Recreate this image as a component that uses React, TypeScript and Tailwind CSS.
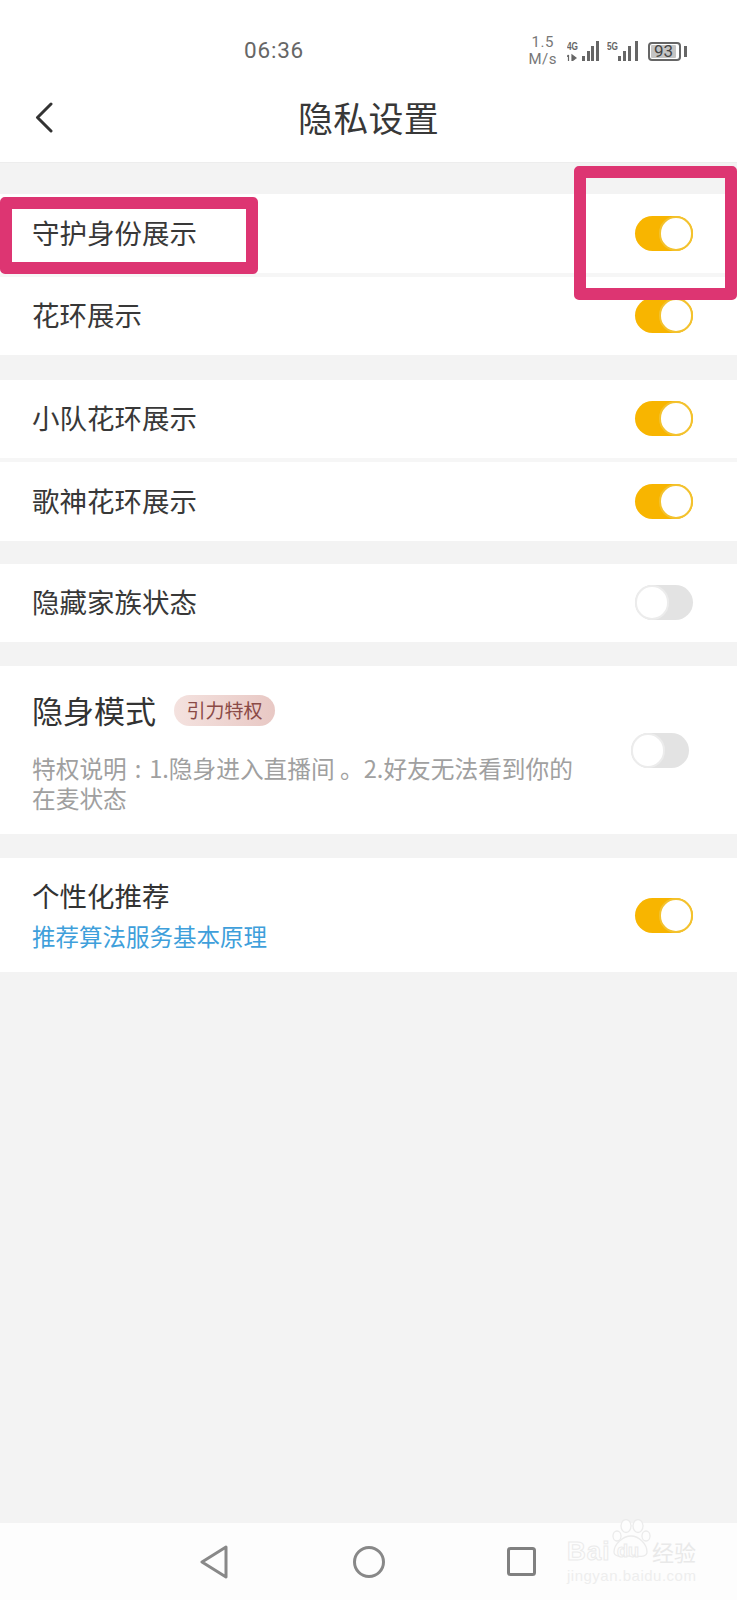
function Toggle({ on }: { on: boolean }) {
  return (
    <div
      className={`flex h-[35px] w-[58px] shrink-0 rounded-full ${on ? 'justify-end bg-[#f8b500]' : 'justify-start bg-[#e3e3e3]'}`}
    >
      <div
        className={`h-[35px] w-[34px] rounded-full border-2 bg-white ${on ? 'border-[#f3c22e]' : 'border-[#ececec]'}`}
      />
    </div>
  );
}

function Row({ label, on }: { label: string; on: boolean }) {
  return (
    <div className="flex h-[78.5px] items-center justify-between bg-white pl-[32px] pr-[44px]">
      <span className="-mt-[2px] text-[27.5px] text-[#383838]">{label}</span>
      <Toggle on={on} />
    </div>
  );
}

function Signal({ label, bars, width, twoLine }: { label: string; bars: number[]; width: number; twoLine?: boolean }) {
  const heights = [5, 10, 15, 20];
  return (
    <svg width={width} height="20" viewBox={`0 0 ${width} 20`} className="shrink-0">
      <text
        x="0"
        y="8.5"
        fontSize="10"
        fontWeight="700"
        fill="#666"
        textLength="11"
        lengthAdjust="spacingAndGlyphs"
        fontFamily="'Liberation Sans', sans-serif"
      >
        {label}
      </text>
      {twoLine && <path d="M1.5 14v6M0 15.5l1.5-1.5M5 14v6l4-3z" stroke="#666" strokeWidth="1.2" fill="#666" />}
      {bars.map((x, i) => (
        <rect key={x} x={x} y={20 - heights[i]} width="3" height={heights[i]} fill="#666" />
      ))}
    </svg>
  );
}

function StatusBar() {
  return (
    <div className="flex h-[80px] items-center pl-[244px] pr-[50px] pt-[22px] text-[#666666] font-['Roboto','Noto_Sans',sans-serif]">
      <span className="text-[22.5px] tracking-[0.8px]">06:36</span>
      <div className="ml-auto flex items-center">
        <div className="mr-[10px] flex flex-col items-center text-[15px] leading-[17px] tracking-[0.5px] text-[#777777]">
          <span>1.5</span>
          <span>M/s</span>
        </div>
        <Signal label="4G" width={32} twoLine bars={[15, 20, 24, 29]} />
        <div className="ml-[8px]">
          <Signal label="5G" width={32} bars={[11, 16, 21, 28]} />
        </div>
        <div className="ml-[9px] flex items-center gap-[3px]">
          <div className="flex h-[19px] w-[33px] items-center rounded-[4px] border-2 border-[#666666] p-[1px]">
            <div className="flex h-full w-[25px] items-center justify-center rounded-[1px] bg-[#c4c4c4] text-[17px] leading-none text-[#444444]">
              93
            </div>
          </div>
          <div className="h-[11px] w-[3px] bg-[#666666]" />
        </div>
      </div>
    </div>
  );
}

function Watermark() {
  return (
    <div className="pointer-events-none absolute left-[567px] top-[1519px] h-[66px] w-[132px] font-['Liberation_Sans',sans-serif]">
      <svg width="44" height="38" viewBox="0 0 44 38" className="absolute left-[44px] top-[0px]" fill="#fdfdfd" stroke="#ebebeb" strokeWidth="1.3">
        <ellipse cx="6" cy="17" rx="4" ry="5" />
        <ellipse cx="15" cy="7" rx="5" ry="6.5" />
        <ellipse cx="27" cy="7" rx="5" ry="6.5" />
        <ellipse cx="35" cy="17" rx="4" ry="5" />
        <path d="M3 33c0-8 9-16 17-16s16 8 16 16c0 6-10 4-16 4s-17 2-17-4z" />
      </svg>
      <span className="absolute left-0 top-[18px] text-[26px] font-bold leading-[28px] tracking-[1px] text-[#fdfdfd] [-webkit-text-stroke:1px_#ebebeb]">
        Bai
      </span>
      <span className="absolute left-[50px] top-[22px] text-[18px] font-bold leading-[20px] text-[#fdfdfd] [-webkit-text-stroke:1px_#ebebeb]">
        du
      </span>
      <span className="absolute left-[85px] top-[18px] text-[22px] leading-[28px] text-[#e9e9e9] font-['Noto_Sans_CJK_SC',sans-serif]">
        经验
      </span>
      <span className="absolute left-0 top-[48px] text-[15px] leading-[18px] tracking-[0.5px] text-[#eeeeee]">
        jingyan.baidu.com
      </span>
    </div>
  );
}

export default function App() {
  return (
    <div className="relative flex h-[1600px] w-[737px] flex-col overflow-hidden bg-[#f3f3f3] font-['Noto_Sans_CJK_SC','Noto_Sans',sans-serif]">
      {/* 顶部 */}
      <div className="h-[163px] shrink-0 border-b border-[#ededed] bg-white">
        <StatusBar />
        <div className="relative flex h-[74px] items-center justify-center">
          <svg width="18" height="31" viewBox="0 0 18 31" fill="none" className="absolute left-[35px] top-[22px]">
            <path d="M16 2 L2.5 15.5 L16 29" stroke="#333" strokeWidth="3" strokeLinecap="round" strokeLinejoin="round" />
          </svg>
          <h1 className="text-[35px] font-normal tracking-[0.3px] text-[#383838]">隐私设置</h1>
        </div>
      </div>

      <div className="flex-1">
        {/* 展示 */}
        <div className="mt-[31px] flex flex-col gap-[4px] bg-[#f6f6f6]">
          <Row label="守护身份展示" on />
          <Row label="花环展示" on />
        </div>

        <div className="mt-[24.5px] flex flex-col gap-[4px] bg-[#f6f6f6]">
          <Row label="小队花环展示" on />
          <Row label="歌神花环展示" on />
        </div>

        <div className="mt-[23px]">
          <Row label="隐藏家族状态" on={false} />
        </div>

        {/* 隐身模式 */}
        <div className="mt-[24px] flex h-[168px] items-center justify-between bg-white pl-[32px] pr-[48px]">
          <div className="w-[548px]">
            <div className="flex items-center">
              <span className="text-[31px] leading-[44px] text-[#333333]">隐身模式</span>
              <span className="ml-[18px] mt-[2px] flex h-[31px] w-[101px] items-center justify-center rounded-full bg-gradient-to-r from-[#f4e2df] to-[#e8c8c4] text-[19px] text-[#8a4a46]">
                引力特权
              </span>
            </div>
            <p className="mt-[21px] text-[23.7px] leading-[30px] text-[#a0a0a0]">
              {'特权说明\u2004:\u20041.隐身进入直播间 。2.好友无法看到你的在麦状态'}
            </p>
          </div>
          <Toggle on={false} />
        </div>

        {/* 个性化推荐 */}
        <div className="mt-[24px] flex h-[114px] items-center justify-between bg-white pl-[32px] pr-[44px]">
          <div className="mb-[4px] flex flex-col">
            <span className="text-[27.5px] leading-[40px] text-[#333333]">个性化推荐</span>
            <span className="mt-[5px] text-[23.5px] leading-[32px] text-[#3f9fdb]">推荐算法服务基本原理</span>
          </div>
          <Toggle on />
        </div>
      </div>

      {/* 底部导航 */}
      <div className="flex h-[77px] shrink-0 items-center bg-[#fdfdfd] pl-[200px]">
        <svg width="28" height="34" viewBox="0 0 28 34" fill="none">
          <path d="M26 2 L2 17 L26 32 Z" stroke="#888" strokeWidth="3" strokeLinejoin="round" />
        </svg>
        <svg width="32" height="32" viewBox="0 0 32 32" fill="none" className="ml-[125px]">
          <circle cx="16" cy="16" r="14.5" stroke="#888" strokeWidth="3" />
        </svg>
        <svg width="29" height="29" viewBox="0 0 29 29" fill="none" className="ml-[122px]">
          <rect x="1.5" y="1.5" width="26" height="26" rx="2" stroke="#808080" strokeWidth="3" />
        </svg>
      </div>

      <Watermark />

      {/* 标注框 */}
      <div className="absolute left-0 top-[197px] h-[77px] w-[258px] rounded-[5px] border-[12px] border-[#dd3572]" />
      <div className="absolute left-[574px] top-[166px] h-[134px] w-[163px] rounded-[5px] border-[12px] border-[#dd3572]" />
    </div>
  );
}
